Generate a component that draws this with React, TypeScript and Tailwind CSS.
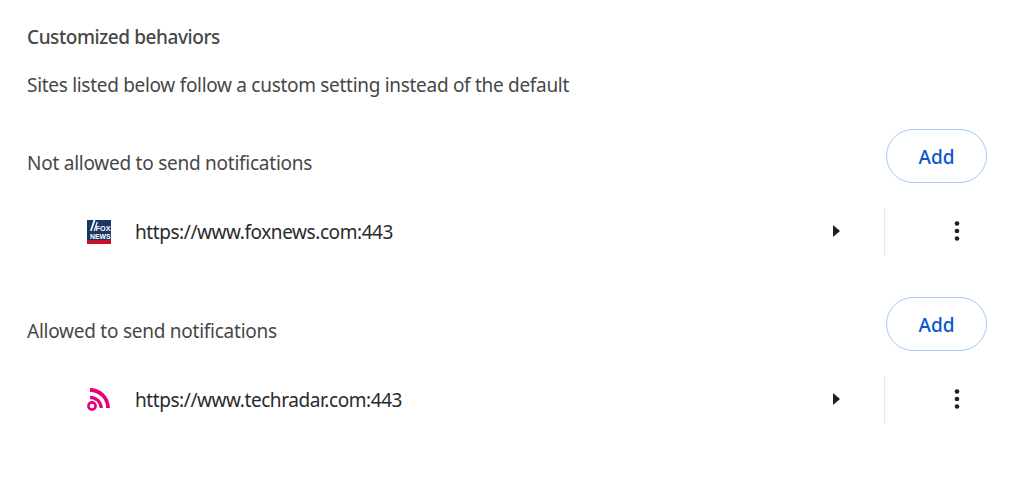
function Fox() {
  return (
    <svg width="24" height="24" viewBox="0 0 24 24" className="shrink-0">
      <rect width="24" height="20" fill="#1b3764" />
      <rect y="20" width="24" height="4" fill="#c8102e" />
      <path d="M3 11 L6.5 0 H8.5 L4.6 11 Z" fill="#fff" />
      <path d="M6.5 11 L9.5 2 H11 L8 11 Z" fill="#dfe6f2" />
      <text x="8.5" y="11" fontSize="8" fontWeight="700" fill="#fff" fontFamily="Liberation Sans, sans-serif" textLength="15" lengthAdjust="spacingAndGlyphs">FOX</text>
      <text x="3" y="18.5" fontSize="7.5" fontWeight="700" fill="#fff" fontFamily="Liberation Sans, sans-serif" textLength="20.5" lengthAdjust="spacingAndGlyphs">NEWS</text>
    </svg>
  );
}

function Rss() {
  return (
    <svg width="24" height="24" viewBox="0 0 24 24" fill="none" stroke="#e6007e" className="shrink-0">
      <circle cx="5" cy="18" r="3.6" strokeWidth="2.6" />
      <path d="M3 9.3 A11.2 11.2 0 0 1 14.3 20" strokeWidth="3.2" />
      <path d="M3 2 A18 18 0 0 1 21 20" strokeWidth="3.8" />
    </svg>
  );
}

function Section({ label, url, icon }: { label: string; url: string; icon: React.ReactNode }) {
  return (
    <div>
      <div className="flex h-[54px] items-start justify-between pr-[31px]">
        <span className="mt-[21px] tracking-[-0.25px]">{label}</span>
        <button className="h-[54px] w-[101px] rounded-full border border-[#a8c7fa] bg-white pt-[1px] text-[19px] font-[550] text-[#0b57d0]">
          Add
        </button>
      </div>
      <div className="mt-[24px] flex h-[50px] items-center">
        <div className="ml-[60px] flex w-[48px] justify-start">{icon}</div>
        <span className="w-[697px] tracking-[-0.43px] text-[#2a2a2a]">{url}</span>
        <svg width="8" height="14" viewBox="0 0 8 14" className="mb-[2px] shrink-0">
          <path d="M1 1 L8 7 L1 13 Z" fill="#1f1f1f" />
        </svg>
        <div className="ml-[44px] h-[48px] w-px bg-[#e8e8e8]" />
        <svg width="6" height="22" viewBox="0 0 6 22" className="mb-[2px] ml-[69px] shrink-0">
          <circle cx="3" cy="3.5" r="2.3" fill="#1f1f1f" />
          <circle cx="3" cy="11" r="2.3" fill="#1f1f1f" />
          <circle cx="3" cy="18.5" r="2.3" fill="#1f1f1f" />
        </svg>
      </div>
    </div>
  );
}

export default function App() {
  return (
    <div className="h-[494px] w-[1018px] overflow-hidden bg-white pl-[27px] pt-[24px] text-[19px] leading-[26px] text-[#474747] [font-family:'Noto_Sans',sans-serif]">
      <div className="font-[550] tracking-[-0.43px]">Customized behaviors</div>
      <div className="mt-[22px] tracking-[-0.3px]">Sites listed below follow a custom setting instead of the default</div>
      <div className="mt-[31px]">
        <Section label="Not allowed to send notifications" url="https://www.foxnews.com:443" icon={<Fox />} />
      </div>
      <div className="mt-[40px]">
        <Section label="Allowed to send notifications" url="https://www.techradar.com:443" icon={<Rss />} />
      </div>
    </div>
  );
}
